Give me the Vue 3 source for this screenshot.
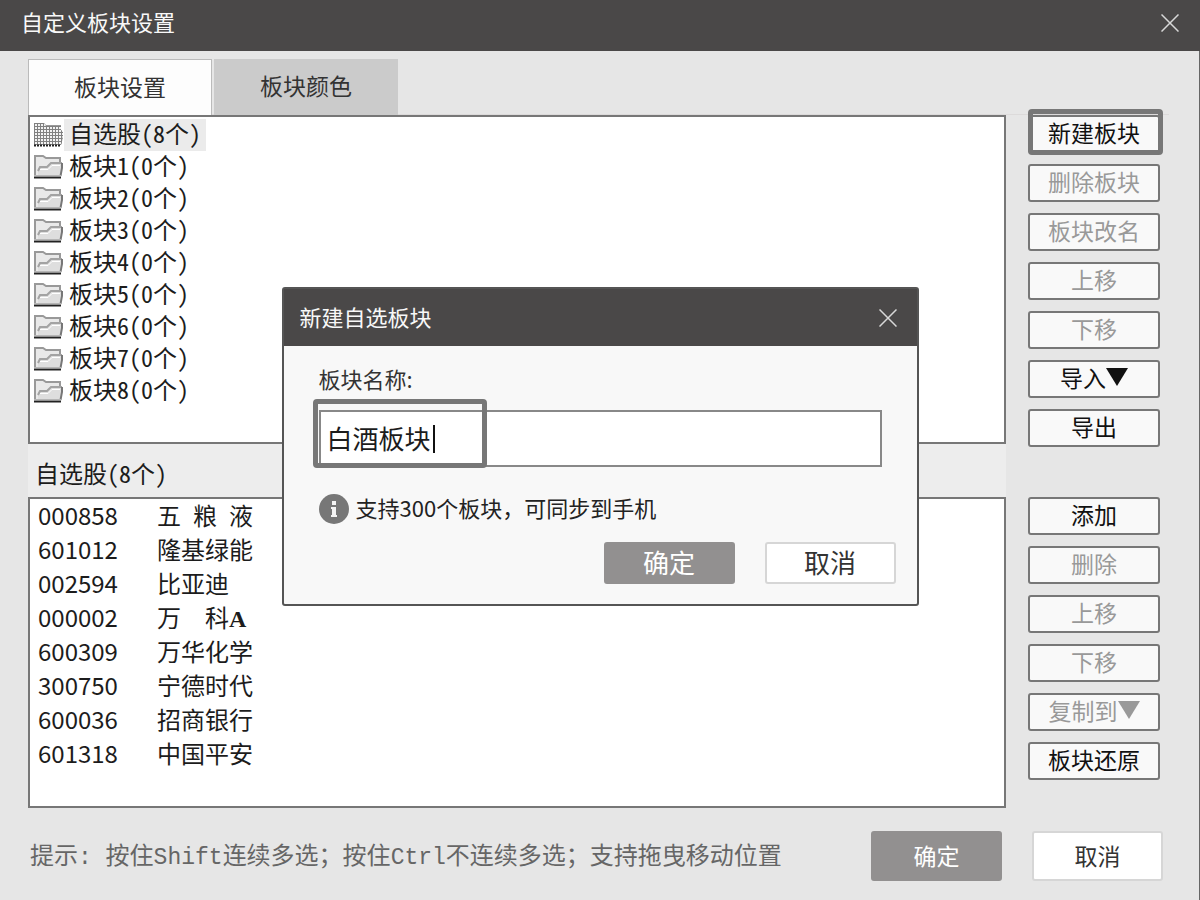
<template>
  <div class="window">
    <header class="titlebar">
      <h1>自定义板块设置</h1>
      <button class="close" type="button" aria-label="关闭">
        <svg width="18" height="18" viewBox="0 0 18 18"><path d="M0.5 0.5 L17.5 17.5 M17.5 0.5 L0.5 17.5" /></svg>
      </button>
    </header>

    <div class="content">
      <nav class="tabs">
        <button
          v-for="tab in tabs"
          :key="tab"
          type="button"
          class="tab"
          :class="{ active: tab === activeTab }"
          @click="activeTab = tab"
        >{{ tab }}</button>
      </nav>

      <div class="columns">
        <main class="lists">
          <ul class="blocks">
            <li v-for="(block, i) in blocks" :key="block.name" :class="{ selected: i === 0 }">
              <svg class="folder" width="30" height="24" viewBox="0 0 30 24">
                <defs>
                  <pattern id="dots" width="3" height="3" patternUnits="userSpaceOnUse">
                    <rect width="3" height="3" fill="#808080" />
                    <rect x="1" y="1" width="2" height="2" fill="#f2f2f2" />
                  </pattern>
                </defs>
                <path d="M1 21 V1 H9 L12 3 H26 V8 H28 V12 L26 21 Z" fill="#e9e9e9" />
                <path d="M1 21 V1 H9 L12 3 H26 V8" fill="none" stroke="#999" stroke-width="2" />
                <path d="M4 20 V14 L6 12 H13 L17 8 H28 V12 L26 20 Z" fill="#dedede" />
                <path d="M4 16 L6 12 H13 L17 8 H28" fill="none" stroke="#a3a3a3" stroke-width="2" />
                <path d="M6 14.5 H14 L18 10.5 H26" fill="none" stroke="#fff" stroke-width="1" />
                <path d="M28 8 V13 L26.5 21" fill="none" stroke="#777" stroke-width="2" />
                <path d="M0 20.5 H27" stroke="#b5b5b5" stroke-width="1" />
                <path v-if="i === 0" d="M0 22 V0 H10 L12 3 H27 V8 H29 V13 L27 22 Z" fill="url(#dots)" />
                <path d="M0 22.5 H27" stroke="#222" stroke-width="2" :stroke-dasharray="i === 0 ? '2 1' : null" />
              </svg>
              <span class="block-name">{{ block.name }}({{ block.count }}个)</span>
            </li>
          </ul>

          <h2 class="caption">自选股(8个)</h2>

          <div class="stocks">
            <table>
              <tbody>
                <tr v-for="stock in stocks" :key="stock.code">
                  <td class="code">{{ stock.code }}</td>
                  <td class="name">{{ stock.name }}<b v-if="stock.suffix">{{ stock.suffix }}</b></td>
                </tr>
              </tbody>
            </table>
          </div>
        </main>

        <aside class="side">
          <div v-for="(group, g) in actions" :key="g" class="group">
            <button
              v-for="action in group"
              :key="action.text"
              type="button"
              class="action"
              :class="{ marked: action.marked }"
              :disabled="action.disabled"
            >{{ action.text }}<svg v-if="action.menu" width="22" height="18" viewBox="0 0 22 18"><path d="M0 0 H22 L11 18 Z" /></svg></button>
          </div>
        </aside>
      </div>

      <footer class="footer">
        <p class="hint">提示<span>: </span>按住<span>Shift</span>连续多选；按住<span>Ctrl</span>不连续多选；支持拖曳移动位置</p>
        <button type="button" class="btn primary">确定</button>
        <button type="button" class="btn">取消</button>
      </footer>
    </div>

    <div class="overlay">
      <form class="dialog" role="dialog" aria-labelledby="dialog-title" @submit.prevent>
        <header class="dialog-title">
          <h2 id="dialog-title">新建自选板块</h2>
          <button class="close" type="button" aria-label="关闭">
            <svg width="18" height="18" viewBox="0 0 18 18"><path d="M0.5 0.5 L17.5 17.5 M17.5 0.5 L0.5 17.5" /></svg>
          </button>
        </header>
        <div class="dialog-body">
          <label for="block-name">板块名称:</label>
          <div class="field">
            <input id="block-name" v-model="name" type="text">
            <span class="frame"></span>
            <span class="caret"></span>
          </div>
          <p class="info">
            <svg width="30" height="30" viewBox="0 0 30 30">
              <circle cx="15" cy="15" r="15" fill="#777" />
              <path d="M13 7 H17 V11 H13 Z M12 13 H17 V21 H18 V23 H12 V21 H13 V15 H12 Z" fill="#f4f4f4" />
            </svg>
            <span>支持300个板块，可同步到手机</span>
          </p>
          <div class="dialog-buttons">
            <button type="submit" class="btn primary">确定</button>
            <button type="button" class="btn">取消</button>
          </div>
        </div>
      </form>
    </div>
  </div>
</template>

<script setup>
import { ref } from 'vue'

const tabs = ['板块设置', '板块颜色']
const activeTab = ref('板块设置')
const name = ref('白酒板块')

const blocks = [{ name: '自选股', count: 8 }]
for (let i = 1; i <= 8; i++) {
  blocks.push({ name: '板块' + i, count: 0 })
}

const stocks = [
  { code: '000858', name: '五 粮 液' },
  { code: '601012', name: '隆基绿能' },
  { code: '002594', name: '比亚迪' },
  { code: '000002', name: '万  科', suffix: 'A' },
  { code: '600309', name: '万华化学' },
  { code: '300750', name: '宁德时代' },
  { code: '600036', name: '招商银行' },
  { code: '601318', name: '中国平安' },
]

const actions = [
  [
    { text: '新建板块', marked: true },
    { text: '删除板块', disabled: true },
    { text: '板块改名', disabled: true },
    { text: '上移', disabled: true },
    { text: '下移', disabled: true },
    { text: '导入', menu: true },
    { text: '导出' },
  ],
  [
    { text: '添加' },
    { text: '删除', disabled: true },
    { text: '上移', disabled: true },
    { text: '下移', disabled: true },
    { text: '复制到', menu: true, disabled: true },
    { text: '板块还原' },
  ],
]
</script>

<style>
body {
  background: #e6e6e6;
}
</style>

<style scoped>
.window {
  position: relative;
  display: flex;
  flex-direction: column;
  min-height: 100vh;
  box-sizing: border-box;
  background: #e6e6e6;
  color: #1c1c1c;
  font-family: "Noto Sans CJK SC", sans-serif;
  font-size: 24px;
}

.window * {
  box-sizing: border-box;
}

h1, h2, p, ul {
  margin: 0;
  padding: 0;
  font-weight: 400;
}

button, input {
  font-family: inherit;
  color: inherit;
  margin: 0;
  padding: 0;
}

.titlebar {
  display: flex;
  align-items: center;
  justify-content: space-between;
  height: 51px;
  padding: 0 21px 6px;
  background: #4a4848;
  color: #f8f8f8;
}

.titlebar h1,
.dialog-title h2 {
  padding-bottom: 4px;
  font-size: 22px;
  line-height: 32px;
}

.close {
  display: flex;
  border: 0;
  background: none;
}

.close path {
  stroke: #d8d8d8;
  stroke-width: 1.5;
}

.content {
  display: flex;
  flex: 1;
  flex-direction: column;
  padding: 8px 0 0 28px;
  border-right: 1px solid #666;
}

.tabs {
  display: flex;
  gap: 2px;
  height: 56px;
  margin-right: 30px;
  border-bottom: 1px solid #dcdada;
}

.tab {
  width: 184px;
  height: 56px;
  padding-bottom: 4px;
  border: 0;
  background: #cbcbcb;
  color: #333;
  font-size: 23px;
}

.tab.active {
  border: 1px solid #bbb;
  border-bottom: 0;
  background: #fdfdfd;
}

.columns {
  display: flex;
  flex: 1;
  gap: 22px;
  padding-right: 39px;
}

.lists {
  display: flex;
  flex: 1;
  flex-direction: column;
  background: #ededed;
}

.blocks {
  min-height: 329px;
  padding: 2px 4px;
  border: 2px solid #777;
  background: #fff;
  list-style: none;
}

.blocks li {
  display: flex;
  align-items: center;
  height: 32px;
}

.block-name {
  padding: 0 5px 4px;
  line-height: 28px;
  font-feature-settings: "hwid";
}

.selected .block-name {
  background: #ebebeb;
}

.caption {
  padding: 5px 0 0 7px;
  font-size: 24px;
  line-height: 48px;
  font-feature-settings: "hwid";
}

.stocks {
  flex: 1;
  padding: 1px 8px;
  border: 2px solid #777;
  background: #fff;
}

table {
  border-collapse: collapse;
}

td {
  height: 34px;
  padding: 0 0 4px;
  line-height: 30px;
  white-space: pre;
}

.code {
  width: 119px;
}

.name {
  font-feature-settings: "hwid";
}

.name b {
  font-family: "Liberation Serif", serif;
  line-height: 1;
}

.side {
  display: flex;
  flex-direction: column;
  gap: 50px;
  width: 132px;
}

.group {
  display: flex;
  flex-direction: column;
  gap: 11px;
}

.action {
  position: relative;
  display: flex;
  align-items: center;
  justify-content: center;
  height: 38px;
  padding-bottom: 4px;
  border: 2px solid #777;
  border-radius: 3px;
  background: #f9f9f9;
  color: #111;
  font-size: 23px;
  line-height: 30px;
}

.action:disabled {
  color: #999;
}

.action svg {
  fill: currentColor;
}

.marked::after {
  content: "";
  position: absolute;
  top: -8px;
  right: -5px;
  bottom: -4px;
  left: -2px;
  border: 5px solid #777;
  border-radius: 4px;
}

.footer {
  display: flex;
  align-items: center;
  gap: 30px;
  height: 92px;
  padding: 4px 36px 0 2px;
}

.hint {
  flex: 1;
  padding-bottom: 6px;
  color: #666;
  white-space: nowrap;
}

.hint span {
  font-family: "Liberation Mono", monospace;
  font-size: 23px;
  white-space: pre;
}

.btn {
  width: 131px;
  height: 50px;
  padding-bottom: 3px;
  border: 2px solid #d6d6d6;
  border-radius: 3px;
  background: #fff;
  color: #333;
  font-size: 23px;
}

.btn.primary {
  border-color: #929090;
  background: #929090;
  color: #fff;
}

.overlay {
  position: absolute;
  inset: 0;
  display: flex;
  align-items: center;
  justify-content: center;
  padding-bottom: 7px;
}

.dialog {
  width: 637px;
  border: 2px solid #555;
  border-radius: 3px;
  background: #f8f8f8;
}

.dialog-title {
  display: flex;
  align-items: center;
  justify-content: space-between;
  height: 57px;
  padding: 0 20px 0 16px;
  background: #4a4848;
  color: #f8f8f8;
}

.dialog-body {
  padding: 16px 21px 20px 35px;
}

label {
  display: block;
  color: #333;
  font-size: 22px;
  line-height: 32px;
}

.field {
  position: relative;
  margin: 16px 14px 0 0;
}

input {
  display: block;
  width: 100%;
  height: 57px;
  padding: 0 6px 2px;
  border: 2px solid #888;
  background: #fff;
  font-size: 26px;
}

.frame {
  position: absolute;
  top: -11px;
  left: -6px;
  width: 174px;
  height: 69px;
  border: 5px solid #777;
  border-radius: 4px;
}

.caret {
  position: absolute;
  top: 15px;
  left: 114px;
  width: 2px;
  height: 28px;
  background: #111;
}

.info {
  display: flex;
  align-items: center;
  gap: 7px;
  margin-top: 25px;
  color: #222;
  font-size: 22px;
}

.info span {
  padding-bottom: 4px;
  line-height: 30px;
}

.dialog-buttons {
  display: flex;
  justify-content: flex-end;
  gap: 30px;
  margin-top: 16px;
}

.dialog-buttons .btn {
  height: 42px;
  font-size: 26px;
  line-height: 34px;
}
</style>
